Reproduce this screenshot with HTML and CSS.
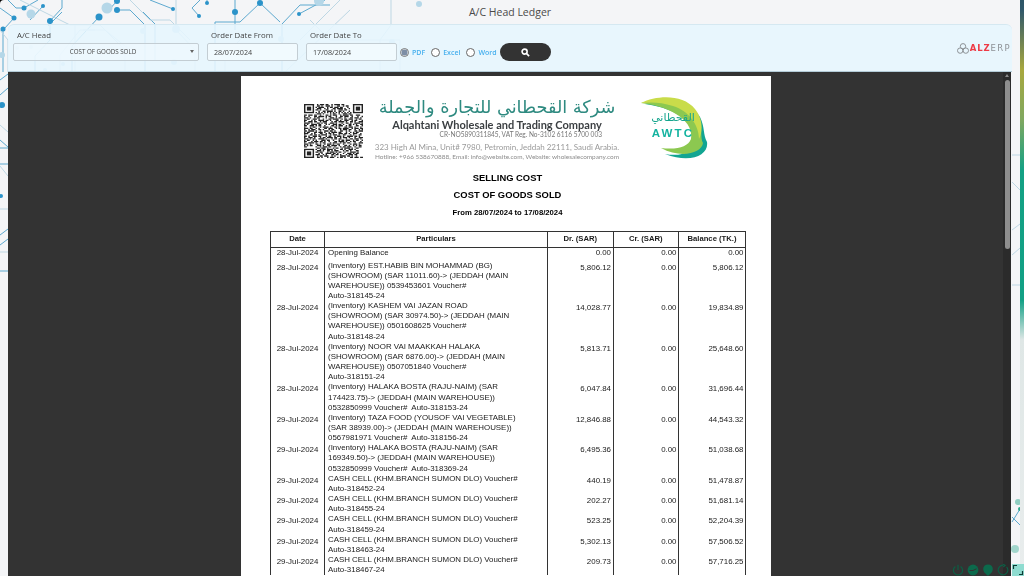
FILE: index.html
```html
<!DOCTYPE html>
<html lang="en">
<head>
<meta charset="utf-8">
<title>A/C Head Ledger</title>
<link rel="stylesheet" href="styles.css">
</head>
<body>
<div class="screen">
  <div class="app">
    <svg class="circuit" viewBox="0 0 1020 576" aria-hidden="true">
      <g class="ln">
        <path d="M8 0L16 8 24 8M24 8L38 0M14 18L0 8M14 18L4 29M43 6L30 20M50 21V40L35 56V72M50 21L62 8V0M99 17L72 46V72M117 10H130L145 25V72M117 1L107 12M62 12L48 26M3 29V72"/>
        <path d="M150 0L173 9M199 16L192 8L200 0M207 3V0M235 12V30M235 12V0M260 3L240 22H215V72M299 14L325 0M260 3L280 22M282 24V72M282 24L300 5H330M143 12L155 24V60M0 80L8 74M0 95L8 88M0 140L8 147M0 148H8M0 164H8M0 271H8M0 235L8 229M0 245L8 239"/>
        <path d="M1012 517L1020 525M1020 509L1012 522M1012 575L1020 566"/>
      </g>
      <g class="ln pale">
        <path d="M0 30L8 40V72M70 25H100L125 50V72M176 0V30L195 50V72M391 0V25L380 40V72M310 20L330 40H400V72M20 0L70 25M95 30H80L60 55V72M340 0L300 40M0 125L8 132M0 209H8M0 252H8M0 166L8 176M75 24V72M83 30H105L130 50M130 0L150 20H170L190 40M250 30L225 55V72M350 10L285 72"/>
        <path d="M1012 155H1020M1012 182L1020 190M1012 230L1020 224M1012 255L1020 248M1012 285H1020"/>
      </g>
      <g class="dot">
        <circle cx="24" cy="8" r="2.5"/><circle cx="43" cy="6" r="2"/><circle cx="14" cy="18" r="2.5"/><circle cx="50" cy="21" r="3"/><circle cx="3" cy="29" r="2.5"/><circle cx="99" cy="17" r="3.5"/><circle cx="117" cy="10" r="3"/><circle cx="117" cy="1" r="3"/><circle cx="173" cy="9" r="2"/><circle cx="199" cy="16" r="2"/><circle cx="207" cy="3" r="2"/><circle cx="235" cy="12" r="3"/><circle cx="260" cy="3" r="3"/><circle cx="299" cy="14" r="2"/><circle cx="2" cy="105" r="3"/><circle cx="1" cy="196" r="2"/>
      </g>
      <g class="dot faint">
        <circle cx="107" cy="8" r="5.5"/><circle cx="31" cy="14" r="4.5"/><circle cx="319" cy="1" r="5"/><circle cx="419" cy="4" r="3"/><circle cx="143" cy="31" r="3"/><circle cx="176" cy="29" r="4"/><circle cx="281" cy="39" r="3"/><circle cx="392" cy="42" r="3"/><circle cx="17" cy="48" r="2"/><circle cx="31" cy="47" r="2"/><circle cx="63" cy="64" r="2"/><circle cx="174" cy="62" r="3"/><circle cx="45" cy="70" r="2"/><circle cx="2" cy="55" r="3"/>
      </g>
      <g class="dot mint">
        <circle cx="1018" cy="502" r="3" opacity=".5"/><circle cx="1015" cy="549" r="4" opacity=".4"/><circle cx="1020" cy="509" r="2"/>
      </g>
    </svg>

    <header class="titlebar">A/C Head Ledger</header>

    <form class="toolbar">
      <div class="field field-head">
        <label class="field-label">A/C Head</label>
        <div class="select">COST OF GOODS SOLD<span class="caret"></span></div>
      </div>
      <div class="field field-date">
        <label class="field-label">Order Date From</label>
        <div class="input">28/07/2024</div>
      </div>
      <div class="field field-date">
        <label class="field-label">Order Date To</label>
        <div class="input">17/08/2024</div>
      </div>
      <div class="formats">
        <label class="format"><input class="radio" type="radio" name="fmt" checked>PDF</label>
        <label class="format"><input class="radio" type="radio" name="fmt">Excel</label>
        <label class="format"><input class="radio" type="radio" name="fmt">Word</label>
      </div>
      <button class="search" type="button" aria-label="Search">
        <svg class="search-icon" viewBox="0 0 10 10"><circle cx="4" cy="4" r="2.8"/><path d="M6 6L9 9"/></svg>
      </button>
      <div class="brand">
        <svg class="brand-icon" viewBox="0 0 12 11"><circle cx="6" cy="3.3" r="2.7"/><circle cx="3.2" cy="7.6" r="2.7"/><circle cx="8.8" cy="7.6" r="2.7"/></svg>
        <span class="brand-red">ALZ</span><span class="brand-gray">ERP</span>
      </div>
    </form>

    <main class="viewer">
      <div class="viewer-main">
        <article class="sheet">
          <div class="letterhead">
            <svg class="qr" viewBox="0 0 41 41" preserveAspectRatio="none" aria-hidden="true">
              <g class="qr-rows">
                <path d="M0 .5H41" stroke-dasharray="7 2 1 1 3 1 2 2 1 1 4 1 2 6 7"/>
                <path d="M0 1.5H41" stroke-dasharray="0 9 2 1 1 2 3 1 1 3 2 2 1 1 2 10"/>
                <path d="M0 2.5H41" stroke-dasharray="0 8 1 1 4 2 1 1 2 1 3 1 2 3 1 2"/>
                <path d="M0 3.5H41" stroke-dasharray="0 9 3 2 1 1 1 3 2 1 4 1 1 2 1 9"/>
                <path d="M0 4.5H41" stroke-dasharray="0 8 2 1 1 3 2 2 1 1 1 2 3 1 2 3"/>
                <path d="M0 5.5H41" stroke-dasharray="0 10 1 2 2 1 4 1 1 2 2 1 1 3 1 9"/>
                <path d="M0 6.5H41" stroke-dasharray="0 8 1 1 1 1 1 1 1 1 1 1 1 1 1 1 1 1 1 1 1 1 1 1 1 1 1 8"/>
                <path d="M0 7.5H41" stroke-dasharray="0 9 3 1 1 4 1 1 2 2 1 2 3 1 2 8"/>
                <path d="M0 8.5H41" stroke-dasharray="2 1 3 1 2 2 1 3 2 1 1 1 3 2 1 1 4 1 2 2 3"/>
                <path d="M0 9.5H41" stroke-dasharray="1 2 1 3 2 1 4 1 1 1 2 3 1 2 2 1 3 2 1 3"/>
                <path d="M0 10.5H41" stroke-dasharray="3 1 1 2 1 1 2 4 1 2 3 1 1 1 2 2 1 3 2 1"/>
                <path d="M0 11.5H41" stroke-dasharray="1 1 2 2 3 1 1 2 1 3 2 1 4 2 1 1 2 1 3 2"/>
                <path d="M0 12.5H41" stroke-dasharray="2 3 1 1 1 2 4 1 2 1 1 3 2 1 1 2 3 2 1 1"/>
                <path d="M0 13.5H41" stroke-dasharray="1 2 3 1 2 2 1 1 3 3 1 1 2 1 4 1 1 2 2 1"/>
                <path d="M0 14.5H41" stroke-dasharray="4 1 1 3 2 1 1 1 2 2 3 1 1 3 1 2 2 1 1 2"/>
                <path d="M0 15.5H41" stroke-dasharray="1 1 1 2 4 1 2 3 1 1 1 2 3 1 2 1 1 3 2 1"/>
                <path d="M0 16.5H41" stroke-dasharray="2 2 3 1 1 1 2 2 1 4 2 1 1 1 3 2 1 1 2 3"/>
                <path d="M0 17.5H41" stroke-dasharray="1 3 1 1 2 3 1 1 4 1 1 2 2 1 1 3 2 1 3 1"/>
                <path d="M0 18.5H41" stroke-dasharray="3 1 2 2 1 1 1 3 2 1 3 2 1 1 2 1 4 2 1 1"/>
                <path d="M0 19.5H41" stroke-dasharray="1 2 1 1 3 2 2 1 1 3 1 1 2 4 1 1 3 1 2 2"/>
                <path d="M0 20.5H41" stroke-dasharray="2 1 4 1 1 2 1 2 3 1 2 1 1 3 2 2 1 1 1 3"/>
                <path d="M0 21.5H41" stroke-dasharray="1 1 2 3 2 1 3 1 1 2 1 1 4 1 2 3 1 2 1 1"/>
                <path d="M0 22.5H41" stroke-dasharray="3 2 1 1 1 3 2 2 1 1 2 1 1 3 3 1 2 1 1 2"/>
                <path d="M0 23.5H41" stroke-dasharray="1 3 2 1 2 1 1 1 4 2 1 1 3 1 1 2 2 3 1 1"/>
                <path d="M0 24.5H41" stroke-dasharray="2 1 1 2 3 1 2 3 1 1 2 2 1 1 3 1 1 2 4 1"/>
                <path d="M0 25.5H41" stroke-dasharray="1 2 3 1 1 3 1 1 2 1 4 1 2 2 1 1 3 1 1 3"/>
                <path d="M0 26.5H41" stroke-dasharray="3 1 1 1 2 2 4 1 1 3 1 1 2 1 2 3 1 2 2 1"/>
                <path d="M0 27.5H41" stroke-dasharray="1 1 2 2 1 1 1 3 3 1 2 2 1 3 1 1 2 1 3 2"/>
                <path d="M0 28.5H41" stroke-dasharray="2 3 1 1 3 1 2 1 1 2 1 3 2 1 4 1 1 2 1 1"/>
                <path d="M0 29.5H41" stroke-dasharray="1 2 4 1 1 2 1 1 2 3 1 1 3 2 1 1 2 1 2 3"/>
                <path d="M0 30.5H41" stroke-dasharray="3 1 1 3 2 1 1 2 1 1 3 1 1 2 2 2 1 4 1 1"/>
                <path d="M0 31.5H41" stroke-dasharray="1 1 1 1 2 3 3 1 1 2 2 1 4 1 1 3 2 1 1 2"/>
                <path d="M0 32.5H41" stroke-dasharray="2 6 1 2 1 1 3 1 2 2 1 3 1 1 2 1 3 2 1 2"/>
                <path d="M0 33.5H41" stroke-dasharray="0 9 2 1 3 1 1 3 1 1 2 2 1 1 4 1 1 2 2 1"/>
                <path d="M0 34.5H41" stroke-dasharray="0 8 1 2 1 1 2 1 4 1 1 3 2 1 1 2 3 1 1 2"/>
                <path d="M0 35.5H41" stroke-dasharray="0 9 3 1 1 2 2 1 1 1 3 3 1 1 2 1 1 3 2 1"/>
                <path d="M0 36.5H41" stroke-dasharray="0 8 2 1 2 3 1 1 3 1 1 1 2 2 1 3 4 1 1 1"/>
                <path d="M0 37.5H41" stroke-dasharray="0 10 1 1 1 2 4 1 2 1 1 3 1 2 3 1 1 1 2 2"/>
                <path d="M0 38.5H41" stroke-dasharray="0 8 3 2 1 1 1 3 2 1 2 1 1 3 1 1 3 1 2 1"/>
                <path d="M0 39.5H41" stroke-dasharray="0 9 1 1 2 1 3 2 1 1 1 3 4 1 2 1 1 2 1 2"/>
                <path d="M0 40.5H41" stroke-dasharray="7 2 2 1 1 3 1 1 3 2 1 1 2 1 1 3 2 1 3 1"/>
              </g>
              <g class="qr-finder">
                <rect x=".5" y=".5" width="6" height="6"/><rect x="34.5" y=".5" width="6" height="6"/><rect x=".5" y="34.5" width="6" height="6"/>
              </g>
              <g class="qr-eye">
                <rect x="2" y="2" width="3" height="3"/><rect x="36" y="2" width="3" height="3"/><rect x="2" y="36" width="3" height="3"/>
              </g>
            </svg>
            <div class="company">
              <div class="company-ar" lang="ar" dir="rtl">شركة القحطاني للتجارة والجملة</div>
              <div class="company-en">Alqahtani Wholesale and Trading Company</div>
              <div class="company-reg">CR-NO5890311845, VAT Reg. No-3102 6116 5700 003</div>
              <div class="company-addr">323 High Al Mina, Unit# 7980, Petromin, Jeddah 22111, Saudi Arabia.</div>
              <div class="company-contact">Hotline: +966 538670888, Email: info@website.com, Website: wholesalecompany.com</div>
            </div>
            <svg class="awtc" viewBox="0 0 67 64" aria-hidden="true">
              <path class="awtc-teal" d="M4 7C24 1 50 4 59 20C64 30 62 38 66 45C68 58 50 67 24 57C40 60 52 55 54 46C58 30 40 12 4 7Z"/>
              <path class="awtc-green" d="M0 6C20 0 48 4 57 20C62 31 59 41 62 46C61 56 40 62 20 51C36 53 47 50 50 42C53 26 34 10 0 6Z"/>
              <path class="awtc-yellow" d="M0 6C16 -2 42 -3 54 12C62 22 62 34 58 42C58 28 48 14 32 9C20 5 10 5 0 6Z"/>
              <text class="awtc-ar" x="32" y="24" lang="ar">القحطاني</text>
              <text class="awtc-en" x="32" y="40">AWTC</text>
            </svg>
          </div>

          <h1 class="report-title">SELLING COST</h1>
          <h2 class="report-head">COST OF GOODS SOLD</h2>
          <p class="report-range">From 28/07/2024 to 17/08/2024</p>

          <table class="ledger">
            <colgroup><col class="c-date"><col class="c-part"><col class="c-num"><col class="c-num"><col class="c-bal"></colgroup>
            <thead>
              <tr><th>Date</th><th>Particulars</th><th>Dr. (SAR)</th><th>Cr. (SAR)</th><th>Balance (TK.)</th></tr>
            </thead>
            <tbody>
              <tr class="opening"><td class="date">28-Jul-2024</td><td class="part">Opening Balance</td><td class="num">0.00</td><td class="num">0.00</td><td class="num">0.00</td></tr>
              <tr><td class="date">28-Jul-2024</td><td class="part">(Inventory) EST.HABIB BIN MOHAMMAD (BG)<br>(SHOWROOM) (SAR 11011.60)-&gt; (JEDDAH (MAIN<br>WAREHOUSE)) 0539453601 Voucher#<br>Auto-318145-24</td><td class="num">5,806.12</td><td class="num">0.00</td><td class="num">5,806.12</td></tr>
              <tr><td class="date">28-Jul-2024</td><td class="part">(Inventory) KASHEM VAI JAZAN ROAD<br>(SHOWROOM) (SAR 30974.50)-&gt; (JEDDAH (MAIN<br>WAREHOUSE)) 0501608625 Voucher#<br>Auto-318148-24</td><td class="num">14,028.77</td><td class="num">0.00</td><td class="num">19,834.89</td></tr>
              <tr><td class="date">28-Jul-2024</td><td class="part">(Inventory) NOOR VAI MAAKKAH HALAKA<br>(SHOWROOM) (SAR 6876.00)-&gt; (JEDDAH (MAIN<br>WAREHOUSE)) 0507051840 Voucher#<br>Auto-318151-24</td><td class="num">5,813.71</td><td class="num">0.00</td><td class="num">25,648.60</td></tr>
              <tr><td class="date">28-Jul-2024</td><td class="part">(Inventory) HALAKA BOSTA (RAJU-NAIM) (SAR<br>174423.75)-&gt; (JEDDAH (MAIN WAREHOUSE))<br>0532850999 Voucher#&nbsp; Auto-318153-24</td><td class="num">6,047.84</td><td class="num">0.00</td><td class="num">31,696.44</td></tr>
              <tr><td class="date">29-Jul-2024</td><td class="part">(Inventory) TAZA FOOD (YOUSOF VAI VEGETABLE)<br>(SAR 38939.00)-&gt; (JEDDAH (MAIN WAREHOUSE))<br>0567981971 Voucher#&nbsp; Auto-318156-24</td><td class="num">12,846.88</td><td class="num">0.00</td><td class="num">44,543.32</td></tr>
              <tr><td class="date">29-Jul-2024</td><td class="part">(Inventory) HALAKA BOSTA (RAJU-NAIM) (SAR<br>169349.50)-&gt; (JEDDAH (MAIN WAREHOUSE))<br>0532850999 Voucher#&nbsp; Auto-318369-24</td><td class="num">6,495.36</td><td class="num">0.00</td><td class="num">51,038.68</td></tr>
              <tr><td class="date">29-Jul-2024</td><td class="part">CASH CELL (KHM.BRANCH SUMON DLO) Voucher#<br>Auto-318452-24</td><td class="num">440.19</td><td class="num">0.00</td><td class="num">51,478.87</td></tr>
              <tr><td class="date">29-Jul-2024</td><td class="part">CASH CELL (KHM.BRANCH SUMON DLO) Voucher#<br>Auto-318455-24</td><td class="num">202.27</td><td class="num">0.00</td><td class="num">51,681.14</td></tr>
              <tr><td class="date">29-Jul-2024</td><td class="part">CASH CELL (KHM.BRANCH SUMON DLO) Voucher#<br>Auto-318459-24</td><td class="num">523.25</td><td class="num">0.00</td><td class="num">52,204.39</td></tr>
              <tr><td class="date">29-Jul-2024</td><td class="part">CASH CELL (KHM.BRANCH SUMON DLO) Voucher#<br>Auto-318463-24</td><td class="num">5,302.13</td><td class="num">0.00</td><td class="num">57,506.52</td></tr>
              <tr><td class="date">29-Jul-2024</td><td class="part">CASH CELL (KHM.BRANCH SUMON DLO) Voucher#<br>Auto-318467-24</td><td class="num">209.73</td><td class="num">0.00</td><td class="num">57,716.25</td></tr>
            </tbody>
          </table>
        </article>
      </div>
      <div class="scrollbar"><span class="scroll-up"></span><span class="scroll-thumb"></span></div>
    </main>

    <div class="dock">
      <svg class="dock-icon" viewBox="0 0 12 12"><path class="ic-line" d="M3.4 2.6A4.6 4.6 0 1 0 8.6 2.6M6 .8V6"/></svg>
      <svg class="dock-icon" viewBox="0 0 12 12"><circle class="ic-fill" cx="6" cy="6" r="5.4"/><path class="ic-cut" d="M2.5 6.5H6L9.5 4.8"/></svg>
      <svg class="dock-icon" viewBox="0 0 12 12"><path class="ic-fill" d="M6 .5C9 .5 10.8 2.600 10.800 5C10.800 8 8 10.500 6 11.800C4 10.500 1.200 8 1.200 5C1.200 2.600 3 .5 6 .5Z"/></svg>
      <svg class="dock-icon" viewBox="0 0 12 12"><path class="ic-line" d="M9.600 2.800A4.800 4.800 0 1 1 6 1.200M6 .2L8 1.300 6.200 3"/></svg>
    </div>
    <div class="expand">
      <svg class="expand-icon" viewBox="0 0 12 12"><path d="M1.500 5V1.500H5M10.500 7V10.500H7"/></svg>
    </div>
  </div>
  <div class="wallpaper"></div>
</div>
</body>
</html>
```

FILE: styles.css
```css
* { box-sizing: border-box; }
html, body { margin: 0; height: 100%; overflow: hidden; }
body { font-family: "Open Sans", sans-serif; color: #444; background: #000; }

.screen { display: flex; width: 1024px; height: 576px; overflow: hidden; }
.app {
  position: relative;
  width: 1020px;
  height: 576px;
  display: flex;
  flex-direction: column;
  background: #f4f5f7;
  border-top-left-radius: 4px;
}
.wallpaper {
  flex: 1;
  background: linear-gradient(180deg, #2d5566 0, #30586a 10px, #a8a83e 70px, #7fa860 120px, #14a184 170px, #12a085 300px, #dfe7e6 340px, #e9eded 576px);
}

.circuit { position: absolute; inset: 0; width: 1020px; height: 576px; }
.ln { fill: none; stroke: #5da9cf; stroke-width: 1; }
.ln.pale { stroke: #bdd7e4; }
.dot { fill: #2b93c9; }
.dot.faint { fill: #b5d7e8; }
.dot.mint { fill: #29a88c; }

.titlebar {
  position: relative;
  height: 24px;
  flex: none;
  text-align: center;
  font-size: 10.500px;
  line-height: 25px;
  color: #4a4a4a;
}

.toolbar {
  position: relative;
  flex: none;
  height: 48px;
  margin: 0 8px;
  width: 1004px;
  display: flex;
  align-items: flex-start;
  padding: 5px 1px 0 5px;
  background: rgba(230, 246, 254, .88);
  border-radius: 6px 6px 0 0;
  border-top: 1px solid #d5e8f1;
  border-bottom: 1px solid #b4ccd8;
  filter: blur(.2px);
}
.field { display: flex; flex-direction: column; gap: 3px; }
.field-head { width: 186px; margin-right: 8px; }
.field-date { width: 91px; margin-right: 8px; }
.field-label { font-size: 7.800px; line-height: 10px; padding-left: 4px; color: #444; }
.select, .input {
  height: 18px;
  border: 1px solid #c3cdd3;
  border-radius: 2px;
  line-height: 16px;
  color: #444;
  background: rgba(240, 250, 255, .6);
}
.select { position: relative; text-align: center; padding-right: 6px; font-size: 6.200px; }
.caret {
  position: absolute;
  right: 4px;
  top: 6px;
  border: 2px solid transparent;
  border-top: 3px solid #666;
}
.input { padding-left: 6px; background: #f1fafe; font-size: 7.200px; }

.formats { display: flex; align-items: center; height: 18px; margin-top: 13px; gap: 6px; margin-left: -5px; }
.format { display: flex; align-items: center; gap: 3px; font-size: 7px; font-weight: 600; color: #48b0ee; }
.radio {
  appearance: none;
  width: 9px;
  height: 9px;
  margin: 0;
  border: 1px solid #666;
  border-radius: 50%;
  background: #fff;
}
.radio:checked { border-color: #777; background: radial-gradient(circle, #7d8ea6 0 2.800px, #e8eef4 3.200px); }
.search {
  width: 51px;
  height: 18px;
  margin: 13px 0 0 3px;
  padding: 0;
  border: 0;
  border-radius: 9px;
  background: #333;
  display: flex;
  align-items: center;
  justify-content: center;
}
.search-icon { width: 9px; height: 9px; fill: none; stroke: #fff; stroke-width: 1.800; }

.brand { margin: 11px 0 0 auto; display: flex; align-items: center; font-family: "DejaVu Sans", sans-serif; font-size: 8.500px; line-height: 14px; letter-spacing: .8px; }
.brand-icon { width: 12px; height: 11px; margin-right: 1px; fill: none; stroke: #8b9094; stroke-width: 1; }
.brand-red { color: #ee3a45; font-weight: 700; }
.brand-gray { color: #8d9196; letter-spacing: 1.400px; }

.viewer {
  position: relative;
  flex: 1;
  min-height: 0;
  margin: 0 9px 0 8px;
  display: flex;
  overflow: hidden;
  background: #333;
}
.viewer-main { flex: 1; display: flex; justify-content: center; padding-top: 4px; padding-left: 1px; overflow: hidden; }
.sheet { width: 530px; flex: none; height: 900px; background: #fff; padding: 12px 26px 0 29px; color: #000; font-family: "Liberation Sans", Arial, sans-serif; filter: blur(.25px); }

.letterhead { display: flex; height: 72px; align-items: flex-start; }
.qr { width: 59px; height: 54px; margin: 16px 0 0 34px; flex: none; }
.qr-rows path { fill: none; stroke: #222; stroke-width: 1; }
.qr-finder rect { fill: #fff; stroke: #222; stroke-width: 1; }
.qr-eye rect { fill: #222; }
.company { width: 248px; margin: 8px 0 0 10px; text-align: center; flex: none; white-space: nowrap; font-family: Lato, "Open Sans", sans-serif; }
.company-ar { font-family: "DejaVu Sans", sans-serif; font-size: 17.700px; line-height: 23px; color: #2e8a80; }
.company-en { font-size: 11px; line-height: 11px; font-weight: 700; color: #3b3f42; }
.company-reg { font-size: 6.550px; line-height: 9px; color: #777; text-align: right; padding-right: 19px; }
.company-addr { font-size: 8px; line-height: 12px; margin-top: 2px; color: #9a9a9a; }
.company-contact { font-size: 6.450px; line-height: 7px; color: #8d8d8d; }
.awtc { width: 67px; height: 64px; margin: 9px 0 0 20px; flex: none; }
.awtc-teal { fill: #12a592; }
.awtc-green { fill: #8cc850; }
.awtc-yellow { fill: #c9dc4a; }
.awtc-ar { font-family: "DejaVu Sans", sans-serif; font-size: 11px; fill: #17a58e; text-anchor: middle; }
.awtc-en { font-family: "Liberation Sans", sans-serif; font-weight: 700; font-size: 11.500px; letter-spacing: 2.200px; fill: #14b3a0; text-anchor: middle; }

.report-title, .report-head, .report-range { margin: 0; text-align: center; font-weight: 700; }
.report-title { font-size: 9.400px; line-height: 12px; margin-top: 12px; }
.report-head { font-size: 9.400px; line-height: 12px; margin-top: 5px; }
.report-range { font-size: 7.700px; line-height: 10px; margin-top: 7px; }

.ledger {
  table-layout: fixed;
  width: 475px;
  margin-top: 13px;
  border-collapse: collapse;
  font-size: 7.900px;
  line-height: 10.150px;
  color: #1a1a1a;
}
.c-date { width: 54px; }
.c-part { width: 223px; }
.c-num { width: 65.500px; }
.c-bal { width: 67px; }
.ledger th { height: 16px; padding: 0; font-size: 7.700px; font-weight: 700; text-align: center; border: 1px solid #333; }
.ledger td { padding: 0; vertical-align: top; border-left: 1px solid #333; border-right: 1px solid #333; }
.ledger td.date { text-align: center; padding-top: 2px; }
.ledger td.part { padding-left: 3px; }
.ledger td.num { text-align: right; padding: 2px 1.500px 0 0; }
.opening td { height: 13px; }
.ledger .opening td.date, .ledger .opening td.num { padding-top: 0; }

.scrollbar { width: 8px; flex: none; background: #2b2b2b; display: flex; flex-direction: column; align-items: center; padding-top: 2px; }
.scroll-up { border: 2.500px solid transparent; border-bottom: 3px solid #8a8a8a; border-top: 0; }
.scroll-thumb { width: 5px; height: 169px; margin-top: 3px; border-radius: 3px; background: #8e8e8e; }

.dock { position: absolute; right: 11px; bottom: 0; height: 12px; display: flex; gap: 3px; align-items: center; }
.dock-icon { width: 12px; height: 12px; }
.ic-line { fill: none; stroke: #0c5f45; stroke-width: 1.200; }
.ic-fill { fill: #0c6a4c; }
.ic-cut { fill: none; stroke: #333; stroke-width: 1; }
.expand { position: absolute; right: -4px; bottom: 0; width: 12px; height: 12px; background: #8fdcd0; display: flex; }
.expand-icon { width: 12px; height: 12px; fill: none; stroke: #0c3c34; stroke-width: 1.200; }
```
